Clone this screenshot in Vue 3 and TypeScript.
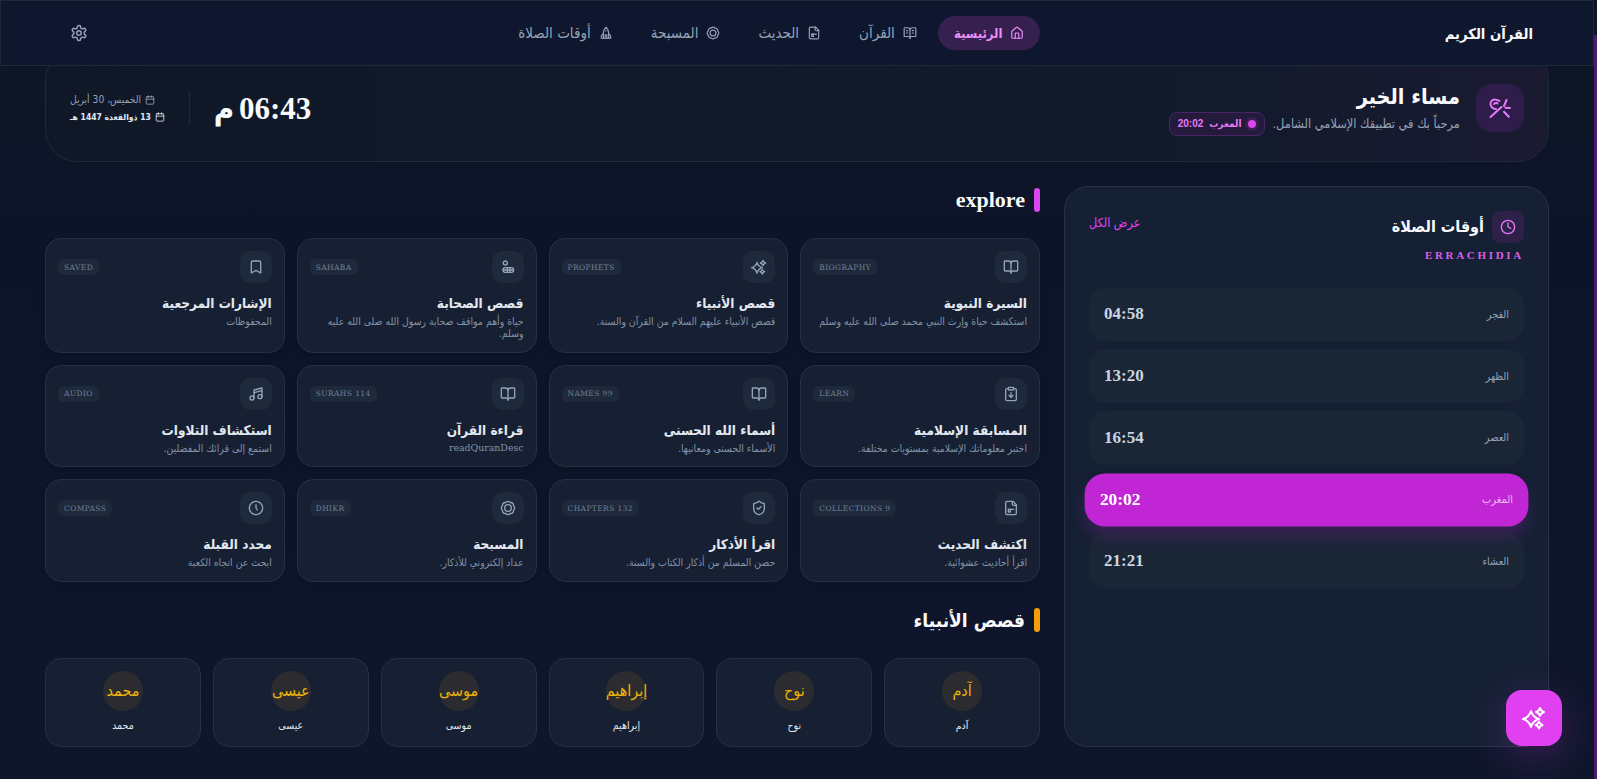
<script setup lang="ts">
// lucide-like icon paths, all on a 24 grid
const ring = (cx: number, cy: number, r: number) =>
  `M${cx - r} ${cy}a${r} ${r} 0 1 0 ${r * 2} 0a${r} ${r} 0 1 0 ${-r * 2} 0z`

const star = (cx: number, cy: number, r: number) => {
  const k = r * 0.22
  return `M${cx} ${cy - r}Q${cx + k} ${cy - k} ${cx + r} ${cy}Q${cx + k} ${cy + k} ${cx} ${cy + r}Q${cx - k} ${cy + k} ${cx - r} ${cy}Q${cx - k} ${cy - k} ${cx} ${cy - r}z`
}

const icons: Record<string, string[]> = {
  home: ['M15 21v-8a1 1 0 0 0-1-1h-4a1 1 0 0 0-1 1v8', 'M3 10a2 2 0 0 1 .709-1.528l7-5.999a2 2 0 0 1 2.582 0l7 5.999A2 2 0 0 1 21 10v9a2 2 0 0 1-2 2H5a2 2 0 0 1-2-2z'],
  book: ['M12 7v14', 'M3 18a1 1 0 0 1-1-1V4a1 1 0 0 1 1-1h5a4 4 0 0 1 4 4 4 4 0 0 1 4-4h5a1 1 0 0 1 1 1v13a1 1 0 0 1-1 1h-6a3 3 0 0 0-3 3 3 3 0 0 0-3-3z'],
  bookText: ['M12 7v14', 'M16 12h2', 'M16 8h2', 'M3 18a1 1 0 0 1-1-1V4a1 1 0 0 1 1-1h5a4 4 0 0 1 4 4 4 4 0 0 1 4-4h5a1 1 0 0 1 1 1v13a1 1 0 0 1-1 1h-6a3 3 0 0 0-3 3 3 3 0 0 0-3-3z', 'M6 12h2', 'M6 8h2'],
  file: ['M15 2H6a2 2 0 0 0-2 2v16a2 2 0 0 0 2 2h12a2 2 0 0 0 2-2V7z', 'M14 2v4a2 2 0 0 0 2 2h4', 'M8 14h8', 'M8 14v4h3v-4z'],
  beads: ['M3.85 8.62a4 4 0 0 1 4.78-4.77 4 4 0 0 1 6.74 0 4 4 0 0 1 4.78 4.78 4 4 0 0 1 0 6.74 4 4 0 0 1-4.77 4.78 4 4 0 0 1-6.75 0 4 4 0 0 1-4.78-4.77 4 4 0 0 1 0-6.76z', ring(12, 12, 5)],
  tower: ['M12 2c3 3 4.5 6 4.5 10v9h-9v-9c0-4 1.500-7 4.500-10z', 'M7.500 13 4 17v4h3.500', 'M16.500 13l3.500 4v4h-3.500', 'M12 8v.5', 'M10.500 21v-6h3v6'],
  gear: ['M12.22 2h-.44a2 2 0 0 0-2 2v.18a2 2 0 0 1-1 1.73l-.43.25a2 2 0 0 1-2 0l-.15-.08a2 2 0 0 0-2.73.73l-.22.38a2 2 0 0 0 .73 2.73l.15.1a2 2 0 0 1 1 1.72v.51a2 2 0 0 1-1 1.74l-.15.09a2 2 0 0 0-.73 2.73l.22.38a2 2 0 0 0 2.73.73l.15-.08a2 2 0 0 1 2 0l.43.25a2 2 0 0 1 1 1.73V20a2 2 0 0 0 2 2h.44a2 2 0 0 0 2-2v-.18a2 2 0 0 1 1-1.73l.43-.25a2 2 0 0 1 2 0l.15.08a2 2 0 0 0 2.73-.73l.22-.39a2 2 0 0 0-.73-2.73l-.15-.08a2 2 0 0 1-1-1.74v-.5a2 2 0 0 1 1-1.74l.15-.09a2 2 0 0 0 .73-2.73l-.22-.38a2 2 0 0 0-2.73-.73l-.15.08a2 2 0 0 1-2 0l-.43-.25a2 2 0 0 1-1-1.73V4a2 2 0 0 0-2-2z', ring(12, 12, 3)],
  wand: ['M2.500 21 13.500 11', 'M11.500 5C9.500 3.500 6 3 4 4.500 2 6 2 9.500 4 11.500c1 1 2.500 1.500 4 1.500', 'M6 8c.8-1.300 2.500-1.500 3.500-.5', 'M18.500 4 16 10', 'M22 12l-4.500-.3', 'M16 15.700l4.800 5'],
  calendar: ['M8 2v4', 'M16 2v4', 'M3 10h18', 'M5 4h14a2 2 0 0 1 2 2v14a2 2 0 0 1-2 2H5a2 2 0 0 1-2-2V6a2 2 0 0 1 2-2z'],
  clock: [ring(12, 12, 10), 'M12 6v6l4 2'],
  compass: [ring(12, 12, 10), 'M12 7v5l2 3'],
  sparkles: [star(9, 13, 8), star(18, 6, 4), star(17, 19, 3.5)],
  users: [ring(8, 6, 3), 'M8 13h9a3.500 3.500 0 0 1 0 7H8a3.500 3.500 0 0 1 0-7z', 'M11 13v7', 'M15 13v7', 'M4.500 16.500h15'],
  bookmark: ['m19 21-7-4-7 4V5a2 2 0 0 1 2-2h10a2 2 0 0 1 2 2v16z'],
  music: ['M9 18V6l12-3v13', 'M9 10l12-3', ring(6, 18, 3), ring(18, 16, 3)],
  quiz: ['M16 4h2a2 2 0 0 1 2 2v14a2 2 0 0 1-2 2H6a2 2 0 0 1-2-2V6a2 2 0 0 1 2-2h2', 'M9 2h6a1 1 0 0 1 1 1v2a1 1 0 0 1-1 1H9a1 1 0 0 1-1-1V3a1 1 0 0 1 1-1z', 'M12 10v7', 'M9 14l3 3 3-3'],
  shield: ['M20 13c0 5-3.500 7.500-7.660 8.950a1 1 0 0 1-.67-.01C7.500 20.500 4 18 4 13V6a1 1 0 0 1 1-1c2 0 4.500-1.200 6.240-2.720a1.170 1.170 0 0 1 1.520 0C14.510 3.810 17 5 19 5a1 1 0 0 1 1 1z', 'm9 12 2 2 4-4'],
}

const navLinks = [
  { label: 'الرئيسية', icon: 'home', active: true },
  { label: 'القرآن', icon: 'bookText', active: false },
  { label: 'الحديث', icon: 'file', active: false },
  { label: 'المسبحة', icon: 'beads', active: false },
  { label: 'أوقات الصلاة', icon: 'tower', active: false },
]

const prayers = [
  { name: 'الفجر', time: '04:58', active: false },
  { name: 'الظهر', time: '13:20', active: false },
  { name: 'العصر', time: '16:54', active: false },
  { name: 'المغرب', time: '20:02', active: true },
  { name: 'العشاء', time: '21:21', active: false },
]

const cards = [
  { title: 'السيرة النبوية', desc: 'استكشف حياة وإرث النبي محمد صلى الله عليه وسلم', badge: 'BIOGRAPHY', icon: 'book' },
  { title: 'قصص الأنبياء', desc: 'قصص الأنبياء عليهم السلام من القرآن والسنة.', badge: 'PROPHETS', icon: 'sparkles' },
  { title: 'قصص الصحابة', desc: 'حياة وأهم مواقف صحابة رسول الله صلى الله عليه وسلم.', badge: 'SAHABA', icon: 'users' },
  { title: 'الإشارات المرجعية', desc: 'المحفوظات', badge: 'SAVED', icon: 'bookmark' },
  { title: 'المسابقة الإسلامية', desc: 'اختبر معلوماتك الإسلامية بمستويات مختلفة.', badge: 'LEARN', icon: 'quiz' },
  { title: 'أسماء الله الحسنى', desc: 'الأسماء الحسنى ومعانيها.', badge: 'NAMES 99', icon: 'book' },
  { title: 'قراءة القرآن', desc: 'readQuranDesc', badge: 'SURAHS 114', icon: 'book' },
  { title: 'استكشاف التلاوات', desc: 'استمع إلى قرائك المفضلين.', badge: 'AUDIO', icon: 'music' },
  { title: 'اكتشف الحديث', desc: 'اقرأ أحاديث عشوائية.', badge: 'COLLECTIONS 9', icon: 'file' },
  { title: 'اقرأ الأذكار', desc: 'حصن المسلم من أذكار الكتاب والسنة.', badge: 'CHAPTERS 132', icon: 'shield' },
  { title: 'المسبحة', desc: 'عداد إلكتروني للأذكار.', badge: 'DHIKR', icon: 'beads' },
  { title: 'محدد القبلة', desc: 'ابحث عن اتجاه الكعبة', badge: 'COMPASS', icon: 'compass' },
]

const prophets = ['آدم', 'نوح', 'إبراهيم', 'موسى', 'عيسى', 'محمد']

const isLatin = (s: string) => !/[\u0600-\u06FF]/.test(s)
</script>

<template>
  <div class="page" dir="rtl">
    <nav class="topbar">
      <span class="brand">القرآن الكريم</span>
      <div class="nav-links">
        <a v-for="link in navLinks" :key="link.label" class="nav-link" :class="{ active: link.active }">
          <svg class="ic14" viewBox="0 0 24 24"><path v-for="d in icons[link.icon]" :key="d" :d="d" /></svg>
          {{ link.label }}
        </a>
      </div>
      <button class="gear">
        <svg class="ic18" viewBox="0 0 24 24"><path v-for="d in icons.gear" :key="d" :d="d" /></svg>
      </button>
    </nav>

    <section class="hero">
      <div class="hero-main">
        <div class="hero-icon">
          <svg class="ic24" viewBox="0 0 24 24"><path v-for="d in icons.wand" :key="d" :d="d" /></svg>
        </div>
        <div>
          <h1 class="greeting">مساء الخير</h1>
          <div class="hero-sub">
            <span>مرحباً بك في تطبيقك الإسلامي الشامل.</span>
            <span class="next-pill">
              <i class="dot" />
              <b>المغرب</b>
              <b class="next-time">20:02</b>
            </span>
          </div>
        </div>
      </div>
      <div class="hero-clock">
        <div class="clock-time">06:43 م</div>
        <div class="clock-sep" />
        <div class="dates">
          <div class="date-line">
            <svg class="ic10" viewBox="0 0 24 24"><path v-for="d in icons.calendar" :key="d" :d="d" /></svg>
            الخميس، 30 أبريل
          </div>
          <div class="date-line strong">
            <svg class="ic10" viewBox="0 0 24 24"><path v-for="d in icons.calendar" :key="d" :d="d" /></svg>
            13 ذوالقعدة 1447 هـ
          </div>
        </div>
      </div>
    </section>

    <div class="layout">
      <aside class="prayer-panel">
        <div class="panel-head">
          <div>
            <div class="panel-title">
              <span class="panel-icon">
                <svg class="ic16" viewBox="0 0 24 24"><path v-for="d in icons.clock" :key="d" :d="d" /></svg>
              </span>
              <h2>أوقات الصلاة</h2>
            </div>
            <div class="city">ERRACHIDIA</div>
          </div>
          <a class="view-all">عرض الكل</a>
        </div>
        <div class="prayer-list">
          <div v-for="p in prayers" :key="p.name" class="prayer" :class="{ current: p.active }">
            <span class="prayer-name">{{ p.name }}</span>
            <span class="prayer-time">{{ p.time }}</span>
          </div>
        </div>
      </aside>

      <main class="content">
        <h2 class="section-title"><i class="bar" />explore</h2>
        <div class="card-grid">
          <article v-for="c in cards" :key="c.title" class="card">
            <div class="card-top">
              <span class="card-icon">
                <svg class="ic16" viewBox="0 0 24 24"><path v-for="d in icons[c.icon]" :key="d" :d="d" /></svg>
              </span>
              <span class="badge">{{ c.badge }}</span>
            </div>
            <h3>{{ c.title }}</h3>
            <p :class="{ latin: isLatin(c.desc) }">{{ c.desc }}</p>
          </article>
        </div>

        <h2 class="section-title second"><i class="bar amber" />قصص الأنبياء</h2>
        <div class="prophet-grid">
          <div v-for="name in prophets" :key="name" class="prophet">
            <span class="prophet-mark">{{ name }}</span>
            <span class="prophet-name">{{ name }}</span>
          </div>
        </div>
      </main>
    </div>

    <button class="fab">
      <svg class="ic24" viewBox="0 0 24 24"><path v-for="d in icons.sparkles" :key="d" :d="d" /></svg>
    </button>
    <div class="thumb" />
  </div>
</template>

<style>
html,
body {
  margin: 0;
  height: 100%;
  overflow: hidden;
  background: #0e1529;
}
</style>

<style scoped>
.page {
  box-sizing: border-box;
  width: 1594px;
  height: 779px;
  padding: 48px 45px 0;
  overflow: hidden;
  color: #f1f5f9;
  font-family: 'DejaVu Sans Condensed', 'DejaVu Sans', sans-serif;
  background: linear-gradient(180deg, #0f1626 0%, #0d1429 30%, #0f162b 100%);
}

svg {
  fill: none;
  stroke: currentColor;
  stroke-width: 2;
  stroke-linecap: round;
  stroke-linejoin: round;
  display: block;
  flex: none;
}
.ic10 { width: 10px; height: 10px; }
.ic14 { width: 14px; height: 14px; }
.ic16 { width: 16px; height: 16px; }
.ic18 { width: 18px; height: 18px; }
.ic24 { width: 24px; height: 24px; }

/* top bar */
.topbar {
  position: fixed;
  top: 0;
  left: 0;
  z-index: 10;
  box-sizing: border-box;
  width: 1594px;
  height: 66px;
  padding: 0 60px;
  display: flex;
  align-items: center;
  justify-content: space-between;
  background: #0f172e;
  border: 1px solid #1e293b;
}
.brand {
  font-size: 14.700px;
  font-weight: 700;
  color: #f8fafc;
}
.nav-links {
  display: flex;
  gap: 4px;
}
.nav-link {
  display: flex;
  align-items: center;
  gap: 8px;
  height: 34px;
  padding: 0 17px;
  border-radius: 17px;
  font-size: 15px;
  color: #94a3b8;
  white-space: nowrap;
}
.nav-link.active {
  color: #eb8df8;
  padding: 0 16px;
  font-size: 13px;
  font-weight: 700;
  background: #35204f;
}
.gear {
  width: 36px;
  height: 36px;
  padding: 0;
  display: flex;
  align-items: center;
  justify-content: center;
  background: none;
  border: 0;
  color: #94a3b8;
}

/* greeting */
.hero {
  box-sizing: border-box;
  height: 114px;
  padding: 36px 24px 30px;
  display: flex;
  align-items: center;
  justify-content: space-between;
  border: 1px solid #1e293b;
  border-radius: 32px;
  background: linear-gradient(270deg, #1a1a30 0%, #101a2b 30%, #101828 100%);
}
.hero-main {
  display: flex;
  align-items: center;
  gap: 16px;
}
.hero-icon {
  width: 48px;
  height: 48px;
  display: flex;
  align-items: center;
  justify-content: center;
  border-radius: 16px;
  background: #2e1d4a;
  color: #e879f9;
}
.greeting {
  margin: 2px 0 1px;
  font-size: 21.500px;
  line-height: 28px;
  font-weight: 700;
  color: #f8fafc;
}
.hero-sub {
  display: flex;
  align-items: center;
  gap: 8px;
  font-size: 12.700px;
  color: #94a3b8;
}
.next-pill {
  display: flex;
  align-items: center;
  gap: 6px;
  height: 24px;
  padding: 0 8px;
  box-sizing: border-box;
  border-radius: 8px;
  border: 1px solid #4a2566;
  background: #241a3c;
  font-size: 10px;
  color: #e879f9;
}
.dot {
  width: 8px;
  height: 8px;
  border-radius: 50%;
  background: #d946ef;
  box-shadow: 0 0 0 3px #35204f;
}
.next-time {
  font-family: 'Liberation Sans', sans-serif;
}
.hero-clock {
  display: flex;
  align-items: center;
  gap: 24px;
}
.clock-time {
  font-family: 'Liberation Serif', 'DejaVu Sans Condensed', serif;
  font-size: 31px;
  font-weight: 700;
  word-spacing: -3px;
  color: #f8fafc;
  white-space: nowrap;
}
.clock-sep {
  width: 1px;
  height: 32px;
  background: #1e293b;
}
.dates {
  display: flex;
  flex-direction: column;
  align-items: flex-end;
  gap: 5px;
}
.date-line {
  display: flex;
  align-items: center;
  gap: 4px;
  font-size: 10.200px;
  line-height: 12px;
  color: #94a3b8;
}
.date-line.strong {
  font-size: 8.500px;
  font-weight: 700;
  color: #e2e8f0;
}

/* two columns */
.layout {
  margin-top: 24px;
  display: grid;
  grid-template-columns: 485px 995px;
  gap: 24px;
}

.prayer-panel {
  box-sizing: border-box;
  padding: 24px;
  border: 1px solid #273244;
  border-radius: 24px;
  background: #152034;
}
.panel-head {
  display: flex;
  justify-content: space-between;
  align-items: flex-start;
  margin-bottom: 25.600px;
}
.panel-title {
  display: flex;
  align-items: center;
  gap: 8px;
}
.panel-title h2 {
  margin: 0;
  font-size: 16px;
  line-height: 30px;
  font-weight: 700;
  color: #f8fafc;
}
.panel-icon {
  width: 32px;
  height: 32px;
  display: flex;
  align-items: center;
  justify-content: center;
  border-radius: 8px;
  background: #2e2148;
  color: #e879f9;
}
.city {
  margin-top: 6px;
  font-family: 'Liberation Serif', serif;
  font-size: 11px;
  font-weight: 700;
  line-height: 13px;
  letter-spacing: 2.7px;
  color: #dd5fea;
}
.view-all {
  font-size: 12.500px;
  color: #e040f0;
  margin-top: 4px;
}
.prayer-list {
  display: flex;
  flex-direction: column;
  gap: 8px;
}
.prayer {
  box-sizing: border-box;
  height: 53.7px;
  padding: 0 15px;
  display: flex;
  align-items: center;
  justify-content: space-between;
  border-radius: 16px;
  background: #1a2536;
}
.prayer-name {
  font-size: 10.800px;
  color: #94a3b8;
}
.prayer-time {
  font-family: 'Liberation Serif', serif;
  font-size: 17px;
  font-weight: 700;
  color: #cbd5e1;
}
.prayer.current {
  height: 51.7px;
  margin: 1px 0;
  transform: scale(1.02);
  border-radius: 20px;
  background: #c026d3;
  box-shadow: 0 10px 15px rgba(192, 38, 211, 0.2);
}
.prayer.current .prayer-name {
  color: #f0b8f6;
}
.prayer.current .prayer-time {
  color: #ffffff;
}

/* explore */
.section-title {
  margin: 0 0 24px;
  height: 28px;
  display: flex;
  align-items: center;
  gap: 9px;
  font-family: 'Liberation Serif', 'DejaVu Sans Condensed', serif;
  font-size: 22px;
  font-weight: 700;
  color: #f8fafc;
}
.section-title.second {
  margin-top: 24px;
  font-family: inherit;
  font-size: 19px;
}
.bar {
  width: 6px;
  height: 24px;
  border-radius: 3px;
  background: #d946ef;
}
.bar.amber {
  background: #f59e0b;
}
.card-grid {
  display: grid;
  grid-template-columns: repeat(4, 1fr);
  gap: 12px;
}
.card {
  box-sizing: border-box;
  padding: 12px;
  border: 1px solid #253042;
  border-radius: 16px;
  background: #162032;
  box-shadow: 0 4px 6px rgba(0, 0, 0, 0.1);
}
.card-top {
  display: flex;
  align-items: center;
  justify-content: space-between;
  margin-bottom: 11px;
}
.card-icon {
  width: 32px;
  height: 32px;
  display: flex;
  align-items: center;
  justify-content: center;
  border-radius: 10px;
  background: #1e293b;
  color: #94a3b8;
}
.badge {
  height: 16px;
  padding: 0 6px;
  display: flex;
  align-items: center;
  border-radius: 6px;
  background: #1e293b;
  font-family: 'DejaVu Serif', serif;
  font-size: 7.500px;
  letter-spacing: 0.4px;
  color: #718096;
  direction: ltr;
}
.card h3 {
  margin: 0 0 1.900px;
  font-size: 13.500px;
  line-height: 19px;
  font-weight: 700;
  color: #e2e8f0;
}
.card p {
  margin: 0;
  font-size: 10.400px;
  line-height: 12.500px;
  color: #8492a6;
}
.card p.latin {
  font-family: 'DejaVu Serif', serif;
  font-size: 9.400px;
}

/* prophets */
.prophet-grid {
  display: grid;
  grid-template-columns: repeat(6, 1fr);
  gap: 12px;
}
.prophet {
  box-sizing: border-box;
  height: 89px;
  padding: 12px;
  display: flex;
  flex-direction: column;
  align-items: center;
  gap: 8px;
  border: 1px solid #253042;
  border-radius: 16px;
  background: #162032;
}
.prophet-mark {
  width: 40px;
  height: 40px;
  display: flex;
  align-items: center;
  justify-content: center;
  border-radius: 50%;
  background: #2c2c30;
  color: #eab308;
  font-size: 16px;
  white-space: nowrap;
}
.prophet-name {
  font-size: 10.500px;
  color: #e2e8f0;
}

/* floating bits */
.fab {
  position: fixed;
  bottom: 33px;
  left: 1506px;
  width: 56px;
  height: 56px;
  padding: 0;
  display: flex;
  align-items: center;
  justify-content: center;
  border: 0;
  border-radius: 16px;
  background: #e040f0;
  color: #fff;
  box-shadow: 0 10px 40px rgba(217, 70, 239, 0.22);
}
.thumb {
  position: fixed;
  top: 35px;
  left: 1594px;
  width: 3px;
  bottom: 0;
  background: #4a1d6e;
}
</style>
